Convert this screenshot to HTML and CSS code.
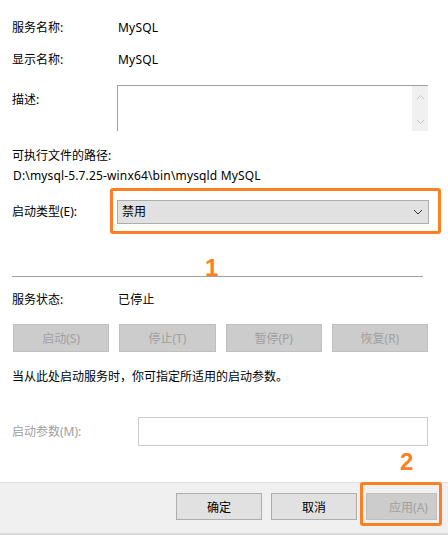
FILE: index.html
```html
<!DOCTYPE html>
<html lang="zh-CN">
<head>
<meta charset="utf-8">
<link rel="stylesheet" href="styles.css">
</head>
<body>
<div class="dialog">
  <div class="content">
    <div class="row r1"><span class="label">服务名称:</span><span class="value">MySQL</span></div>
    <div class="row r2"><span class="label">显示名称:</span><span class="value">MySQL</span></div>
    <div class="row r3">
      <span class="label desc-label">描述:</span>
      <div class="textarea">
        <div class="scrollbar">
          <svg class="arrow" width="9" height="6" viewBox="0 0 9 6"><polyline points="1,5 4.5,1.5 8,5" fill="none" stroke="#c2c2c2" stroke-width="1"/></svg>
          <svg class="arrow" width="9" height="6" viewBox="0 0 9 6"><polyline points="1,1 4.5,4.5 8,1" fill="none" stroke="#c2c2c2" stroke-width="1"/></svg>
        </div>
      </div>
    </div>
    <div class="path-label">可执行文件的路径:</div>
    <div class="path">D:\mysql-5.7.25-winx64\bin\mysqld MySQL</div>
    <div class="row r-type">
      <span class="label">启动类型(E):</span>
      <div class="select-wrap">
        <div class="select">
          <span>禁用</span>
          <svg width="10" height="6" viewBox="0 0 10 6"><polyline points="1,1 5,5 9,1" fill="none" stroke="#333" stroke-width="1"/></svg>
        </div>
      </div>
    </div>
    <div class="sep-wrap">
      <span class="mark mark1">1</span>
      <div class="sep"></div>
    </div>
    <div class="row r-status"><span class="label">服务状态:</span><span class="value">已停止</span></div>
    <div class="btns">
      <div class="btn disabled">启动(S)</div>
      <div class="btn disabled">停止(T)</div>
      <div class="btn disabled">暂停(P)</div>
      <div class="btn disabled">恢复(R)</div>
    </div>
    <div class="hint">当从此处启动服务时，你可指定所适用的启动参数。</div>
    <div class="row r-param">
      <span class="label param-label">启动参数(M):</span>
      <div class="input"></div>
    </div>
  </div>
  <div class="footer">
    <span class="mark mark2">2</span>
    <div class="fbtn">确定</div>
    <div class="fbtn">取消</div>
    <div class="fbtn apply">应用(A)</div>
  </div>
</div>
</body>
</html>
```
FILE: styles.css
```css
html, body {
  margin: 0;
  padding: 0;
  background: #ffffff;
}
body {
  width: 448px;
  height: 535px;
  overflow: hidden;
  font-family: "Noto Sans", "Noto Sans CJK SC", sans-serif;
  font-size: 12px;
  color: #000;
}
.dialog {
  display: flex;
  flex-direction: column;
  height: 535px;
}
.content {
  flex: 1;
  padding: 0 20px 0 12px;
  position: relative;
}
.row {
  display: flex;
  align-items: center;
  line-height: 16px;
}
.label {
  width: 105px;
  flex: none;
}
.value {
  padding-left: 1px;
  letter-spacing: 0.2px;
}
.r1 { margin-top: 20px; }
.r2 { margin-top: 16px; }
.r3 {
  margin-top: 17px;
  align-items: flex-start;
}
.desc-label { padding-top: 7px; }
.textarea {
  flex: 1;
  height: 46px;
  box-sizing: border-box;
  border-top: 1px solid #a0a0a0;
  border-left: 1px solid #a0a0a0;
  display: flex;
  justify-content: flex-end;
}
.scrollbar {
  width: 16px;
  background: #f0f0f0;
  display: flex;
  flex-direction: column;
  align-items: center;
  justify-content: space-between;
  padding: 8px 0 6px;
  box-sizing: border-box;
}
.arrow { display: block; }
.path-label {
  margin-top: 17px;
  line-height: 16px;
}
.path {
  margin-top: 4px;
  line-height: 16px;
  padding-left: 1px;
  letter-spacing: 0.15px;
}
.r-type {
  margin-top: 16px;
}
.select-wrap {
  flex: 1;
  position: relative;
  margin-right: -1px;
}
.select-wrap::after {
  content: "";
  position: absolute;
  left: -7px;
  right: -12px;
  top: -12px;
  bottom: -10px;
  border: 3px solid #fd7f23;
  border-radius: 3px;
  pointer-events: none;
}
.select {
  height: 24px;
  box-sizing: border-box;
  background: #e1e1e1;
  border: 1px solid #adadad;
  display: flex;
  align-items: center;
  justify-content: space-between;
  padding: 0 5px 0 4px;
}
.select svg { display: block; }
.sep-wrap {
  position: relative;
  margin-top: 52px;
  margin-right: 5px;
}
.sep {
  height: 1px;
  background: #a0a0a0;
}
.mark {
  position: absolute;
  font-family: "Liberation Sans", Arial, sans-serif;
  font-weight: bold;
  font-size: 24px;
  line-height: 24px;
  color: #fd7f23;
}
.mark1 {
  left: 193px;
  top: -20px;
}
.r-status {
  margin-top: 15px;
}
.btns {
  display: grid;
  grid-template-columns: repeat(4, 1fr);
  gap: 10px;
  margin-top: 16px;
  margin-left: 1px;
}
.btn {
  height: 28px;
  box-sizing: border-box;
  display: flex;
  align-items: center;
  justify-content: center;
  border: 1px solid #bfbfbf;
  background: #cccccc;
  color: #a0a0a0;
}
.hint {
  margin-top: 17px;
  line-height: 16px;
}
.r-param {
  margin-top: 32px;
}
.param-label {
  width: 126px;
  color: #a0a0a0;
}
.input {
  flex: 1;
  height: 29px;
  box-sizing: border-box;
  border: 1px solid #cccccc;
  background: #fff;
}
.footer {
  position: relative;
  height: 53px;
  box-sizing: border-box;
  background: #f0f0f0;
  border-top: 1px solid #dfdfdf;
  border-bottom: 2px solid #dadada;
  display: flex;
  justify-content: flex-end;
  align-items: flex-start;
  padding: 10px 11px 0 0;
  gap: 9px;
}
.fbtn {
  width: 86px;
  height: 27px;
  box-sizing: border-box;
  border: 1px solid #adadad;
  background: #e1e1e1;
  display: flex;
  align-items: center;
  justify-content: center;
}
.fbtn.apply {
  width: 71px;
  background: #cccccc;
  border-color: #bfbfbf;
  color: #a0a0a0;
  padding-left: 14px;
}
.mark2 {
  left: 400px;
  top: -33px;
}
.footer::after {
  content: "";
  position: absolute;
  left: 360px;
  top: -1px;
  width: 82px;
  height: 44px;
  box-sizing: border-box;
  border: 3px solid #fd7f23;
  border-radius: 3px;
}
```
